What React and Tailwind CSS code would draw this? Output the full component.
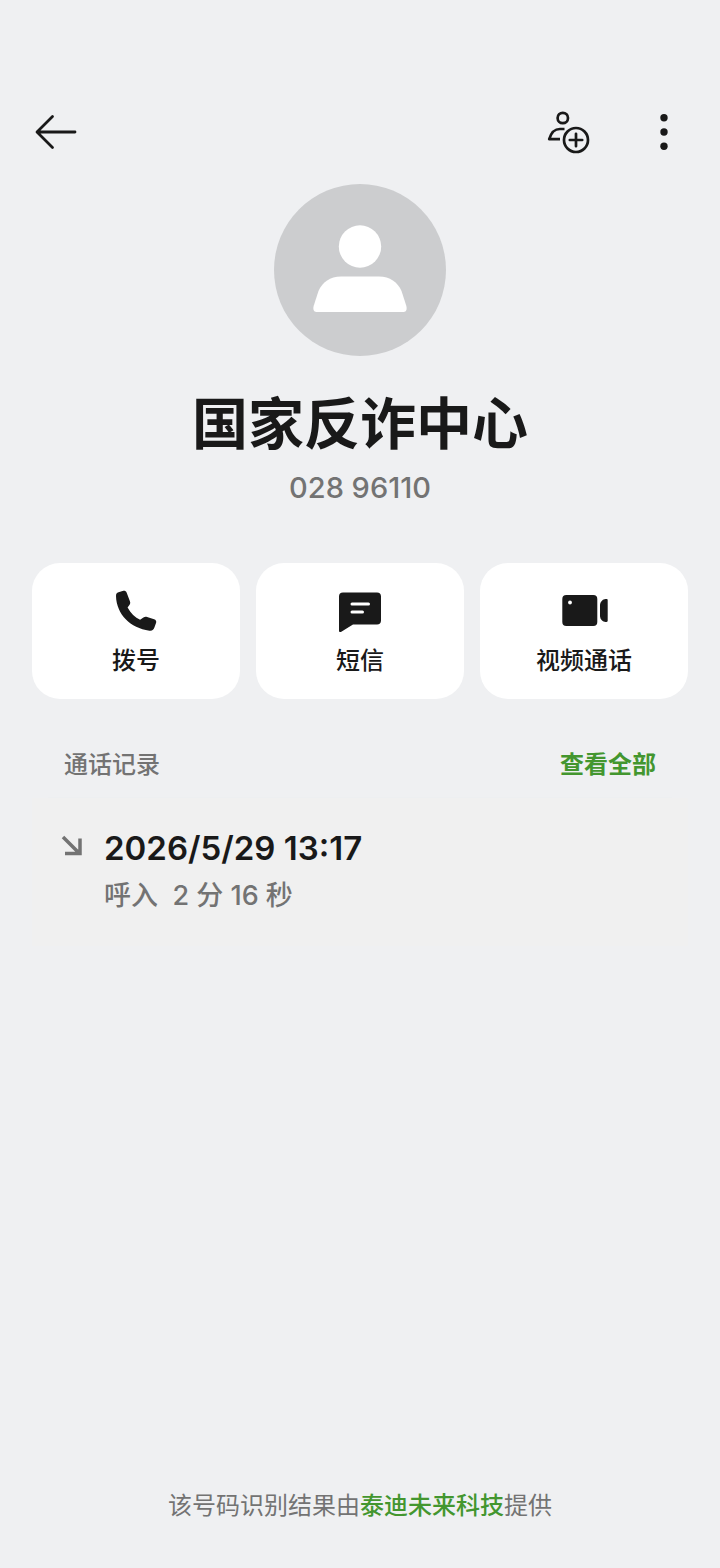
function BackIcon() {
  return (
    <svg viewBox="0 0 48 48" className="w-12 h-12" fill="none" stroke="currentColor" strokeWidth="2.8" strokeLinecap="round" strokeLinejoin="round">
      <path d="M43 24H5.500M20.500 8.500L5 24l15.500 15.500" />
    </svg>
  );
}

function AddContactIcon() {
  return (
    <svg viewBox="0 0 48 48" className="w-12 h-12" fill="none" stroke="currentColor" strokeWidth="2.7" strokeLinecap="round" strokeLinejoin="round">
      <circle cx="18.800" cy="10" r="5.200" />
      <path d="M20.500 21h-4.500c-5.500 0-8.500 2.500-10.800 10.200h10.800" strokeLinecap="butt" />
      <circle cx="32" cy="32" r="12" />
      <path d="M32 25.800v12.400M25.800 32h12.400" />
    </svg>
  );
}

function MoreIcon() {
  return (
    <svg viewBox="0 0 48 48" className="w-12 h-12" fill="currentColor">
      <circle cx="24" cy="9.700" r="3.700" />
      <circle cx="24" cy="24" r="3.700" />
      <circle cx="24" cy="38.300" r="3.700" />
    </svg>
  );
}

function Avatar() {
  return (
    <svg viewBox="0 0 172 172" className="w-[172px] h-[172px]" role="img" aria-label="联系人头像">
      <circle cx="86" cy="86" r="86" fill="#cccdcf" />
      <circle cx="86" cy="62.500" r="21.200" fill="#fff" />
      <path d="M67 92.500h38c11 0 18.500 5.500 22.500 14.500l4.700 14.500c1 3.200.4 6.500-2.700 6.500H42.500c-3.100 0-3.700-3.300-2.700-6.500l4.700-14.500c4-9 11.500-14.500 22.500-14.500z" fill="#fff" />
    </svg>
  );
}

function PhoneIcon() {
  return (
    <svg viewBox="0 0 48 48" className="w-12 h-12" fill="currentColor">
      <path d="M6.500 5.200l4.100-1.200c2-.5 3.400.1 4.100 1.800l3.300 8.700c.5 1.400.2 2.400-.6 3.500l-1.800 2.400c3 6 7.500 9.800 12.500 12.300l3.300-2.200c1.200-.9 2.300-1 3.700-.6l7 2.300c1.800.6 2.500 1.900 2 3.600l-1.700 4.800c-.7 2.300-2.100 3.400-5 3.100C18.500 41 4.500 27.500 4 9c0-2.200.7-3.200 2.500-3.800z" />
    </svg>
  );
}

function MessageIcon() {
  return (
    <svg viewBox="0 0 48 48" className="w-12 h-12" fill="currentColor">
      <path d="M7 5.500h34c2.600 0 4 1.400 4 4v24c0 2.600-1.400 4-4 4H17L5.300 44.700C4 45.500 3 44.900 3 43.500v-34c0-2.600 1.400-4 4-4z" />
      <path d="M16 17h16.500M16 25h10.500" stroke="#fff" strokeWidth="3" strokeLinecap="round" />
    </svg>
  );
}

function VideoIcon() {
  return (
    <svg viewBox="0 0 48 48" className="w-12 h-12" fill="currentColor">
      <rect x="2.300" y="8" width="35" height="31" rx="4" />
      <path d="M45.500 12h1c.7 0 1.200.5 1.200 1.200v20.600c0 .7-.5 1.200-1.200 1.200h-1c-2.500 0-5.500-3-5.500-6V18c0-3 3-6 5.500-6z" />
      <circle cx="10" cy="15.500" r="1.900" fill="#fff" />
    </svg>
  );
}

function IncomingIcon() {
  return (
    <svg viewBox="0 0 24 24" className="w-6 h-6" fill="none" stroke="currentColor" strokeWidth="3.500">
      <path d="M3 3l16 16M5 19.500h15V4.500" />
    </svg>
  );
}

const actions = [
  { label: '拨号', Icon: PhoneIcon },
  { label: '短信', Icon: MessageIcon },
  { label: '视频通话', Icon: VideoIcon },
];

export default function App() {
  return (
    <div lang="zh-CN" className="min-h-screen flex flex-col bg-[#eff0f2] text-[#191919] font-['Inter','Noto_Sans_CJK_SC',sans-serif]">
      <header className="flex items-center justify-between px-8 pt-[108px]">
        <button type="button" aria-label="返回">
          <BackIcon />
        </button>
        <div className="flex items-center gap-12">
          <button type="button" aria-label="添加联系人">
            <AddContactIcon />
          </button>
          <button type="button" aria-label="更多">
            <MoreIcon />
          </button>
        </div>
      </header>

      <main className="px-8 pt-7">
        <section className="flex flex-col items-center">
          <Avatar />
          <h1 className="mt-8 text-[56px] leading-[72px] font-bold">国家反诈中心</h1>
          <p className="mt-2 text-[29px] leading-10 font-medium text-[#737373]">028 96110</p>
        </section>

        <section className="mt-[55px] grid grid-cols-3 gap-4">
          {actions.map(({ label, Icon }) => (
            <button key={label} type="button" className="flex flex-col items-center rounded-[28px] bg-white pt-6 pb-[22px]">
              <Icon />
              <span className="mt-2.5 text-2xl leading-8 font-medium">{label}</span>
            </button>
          ))}
        </section>

        <section className="mt-12">
          <div className="flex items-center justify-between px-8">
            <h2 className="text-2xl leading-9 font-medium text-[#737373]">通话记录</h2>
            <a href="#all" className="text-2xl leading-9 font-bold text-[#43962f]">查看全部</a>
          </div>
          <hr className="mt-[14px] mx-4 border-[#edeff1]" />
          <div className="flex gap-5 bg-[#f0f0f0] pl-7 pr-8 pt-7 pb-7">
            <div className="pt-2 text-[#737373]">
              <IncomingIcon />
            </div>
            <div>
              <p className="text-[33px] leading-[44px] font-semibold">2026/5/29 13:17</p>
              <p className="mt-1 text-[27px] leading-[44px] font-medium text-[#737373]">呼入&nbsp; 2 分 16 秒</p>
            </div>
          </div>
        </section>
      </main>

      <footer className="mt-auto pb-11 text-center text-2xl leading-9 text-[#737373]">
        该号码识别结果由<a href="#provider" className="font-medium text-[#43962f]">泰迪未来科技</a>提供
      </footer>
    </div>
  );
}
